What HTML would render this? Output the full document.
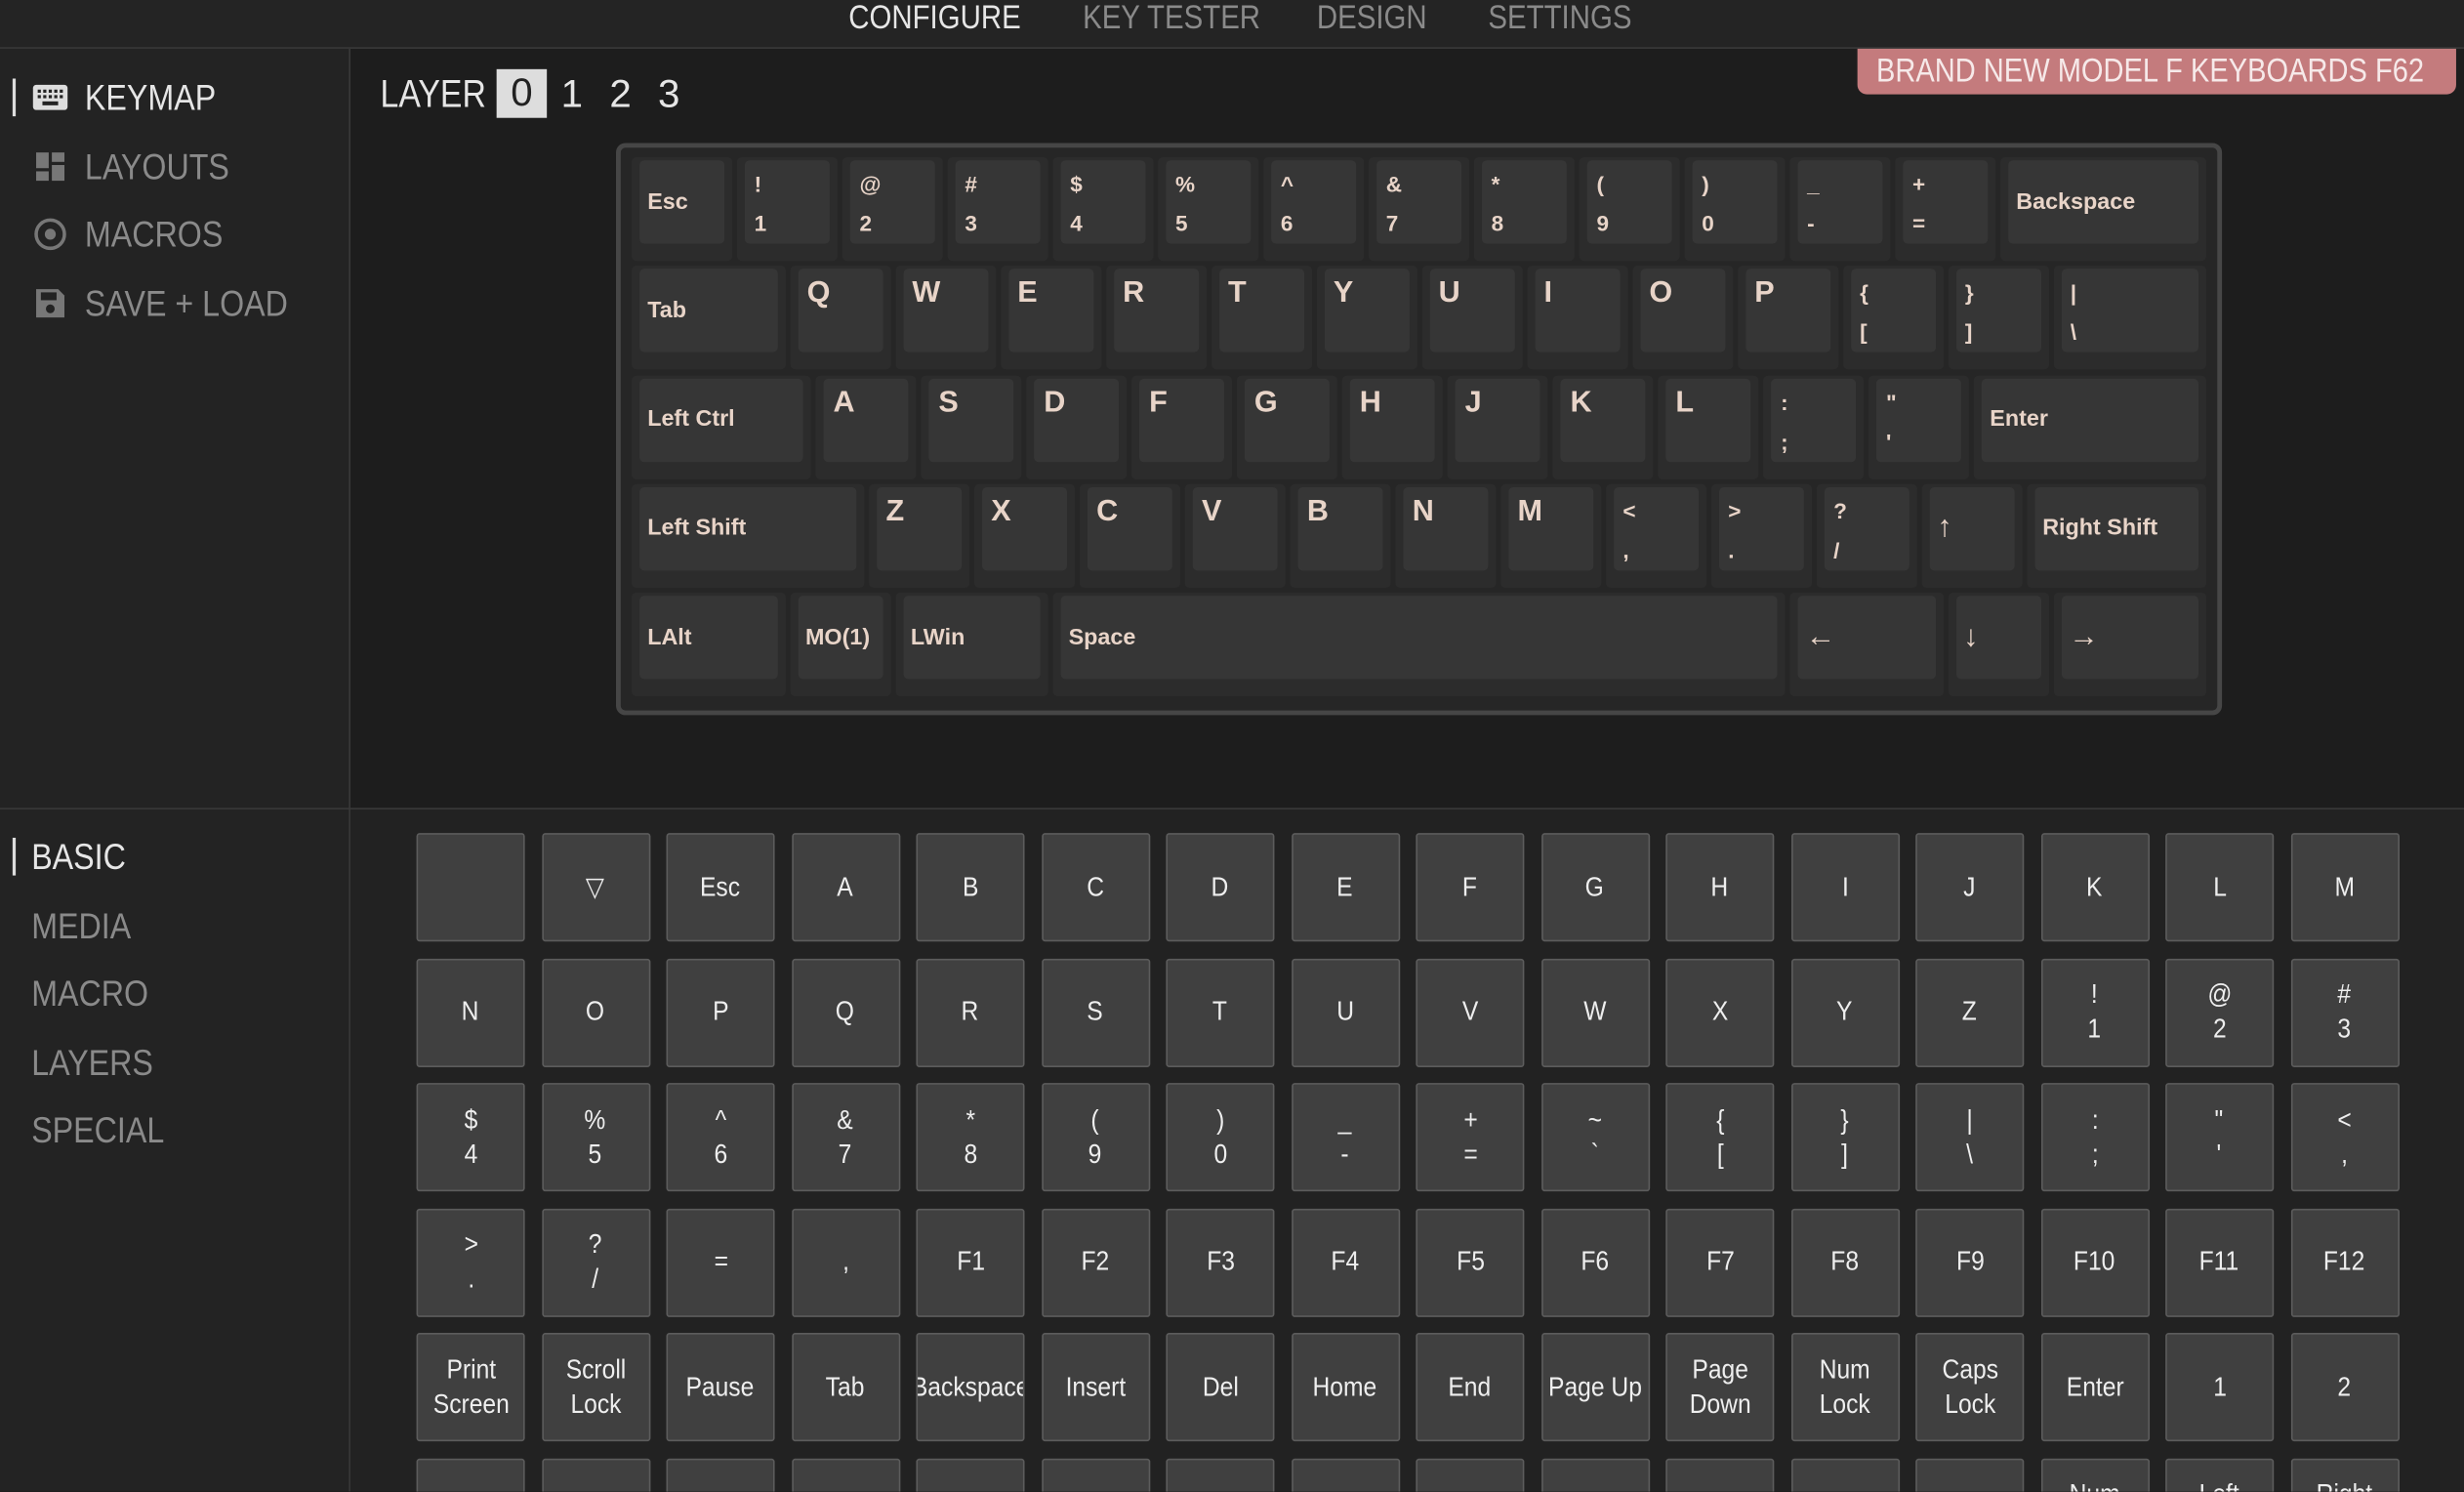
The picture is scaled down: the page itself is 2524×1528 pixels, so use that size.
<!DOCTYPE html>
<html><head><meta charset="utf-8"><style>
html,body{margin:0;padding:0;background:#1d1d1d;overflow:hidden;width:2524px;height:1528px}
#w{position:absolute;left:0;top:0;width:1568px;height:949px;transform:scale(1.60969);transform-origin:0 0;background:#1d1d1d;font-family:"Liberation Sans",sans-serif;overflow:hidden}
.n{display:inline-block;transform:scaleX(.87);transform-origin:0 50%;white-space:nowrap}
.top{position:absolute;left:0;top:0;width:1568px;height:30px;background:#242424;border-bottom:1px solid #3a3a3a}
.nav{position:absolute;top:0;font-size:21px;color:#8a8a8a;line-height:24px;white-space:nowrap}
.side{position:absolute;left:0;top:31px;width:222px;height:918px;background:#232323;border-right:1px solid #393939}
.hline{position:absolute;left:0;top:514px;width:1568px;height:1px;background:#393939}
.bot{position:absolute;left:223px;top:515px;width:1345px;height:434px;background:#222}
.si{position:absolute;left:20px;font-size:23px;color:#8a8a8a;display:flex;align-items:center;gap:10px;line-height:26px;white-space:nowrap}
.si svg{width:24px;height:24px;flex:none}
.bar{position:absolute;left:8px;width:2px;background:#ddd}
.kb{position:absolute;left:392px;top:91px;width:1016px;height:358px;border:3px solid #464646;border-radius:6px;background:#262626}
.k{position:absolute;height:66px;background:#2c2c2c;border-radius:3px}
.c{position:absolute;left:5px;right:5px;top:2px;bottom:11px;background:#363636;border-radius:3px;color:#e8d4c8;font-family:"Liberation Sans",sans-serif;font-weight:bold}
.L{font-size:19px;position:absolute;left:6px;top:5px}
.M{font-size:14.5px;position:absolute;left:5px;top:0;bottom:0;display:flex;align-items:center;white-space:nowrap}
.A{font-size:19px}
.D{font-size:14px;position:absolute;left:6px;top:3px;line-height:25px}
.g{position:absolute;width:67px;height:67px;background:#404040;border:1px solid #5c5c5c;border-radius:2px;color:#eee;font-size:17px;display:flex;align-items:center;justify-content:center;text-align:center;line-height:22px;overflow:hidden;white-space:nowrap}
.g span{display:inline-block;transform:scaleX(.9)}
.bi{position:absolute;left:20px;font-size:23px;color:#8a8a8a;line-height:26px}
</style></head><body><div id="w">
<div class="top"></div>
<div class="nav" style="left:540px;color:#e6e6e6"><span class="n">CONFIGURE</span></div>
<div class="nav" style="left:689px"><span class="n">KEY TESTER</span></div>
<div class="nav" style="left:838px"><span class="n">DESIGN</span></div>
<div class="nav" style="left:947px"><span class="n">SETTINGS</span></div>
<div class="side"></div>
<div class="bot"></div>
<div class="hline"></div>
<div class="bar" style="top:50px;height:24px"></div>
<div class="si" style="top:49px;color:#e6e6e6"><svg viewBox="0 0 24 24"><rect x="1" y="4" width="22" height="16" rx="2" fill="#ddd"/><g fill="#232323"><rect x="4" y="7" width="2" height="2"/><rect x="7.5" y="7" width="2" height="2"/><rect x="11" y="7" width="2" height="2"/><rect x="14.5" y="7" width="2" height="2"/><rect x="18" y="7" width="2" height="2"/><rect x="4" y="10.5" width="2" height="2"/><rect x="7.5" y="10.5" width="2" height="2"/><rect x="11" y="10.5" width="2" height="2"/><rect x="14.5" y="10.5" width="2" height="2"/><rect x="18" y="10.5" width="2" height="2"/><rect x="7" y="14.5" width="10" height="2.5"/></g></svg><span class="n">KEYMAP</span></div>
<div class="si" style="top:93px"><svg viewBox="0 0 24 24" fill="#777"><rect x="3" y="3" width="8" height="10"/><rect x="13" y="3" width="8" height="6"/><rect x="13" y="11" width="8" height="10"/><rect x="3" y="15" width="8" height="6"/></svg><span class="n">LAYOUTS</span></div>
<div class="si" style="top:136px"><svg viewBox="0 0 24 24"><circle cx="12" cy="12" r="9" fill="none" stroke="#777" stroke-width="2.2"/><circle cx="12" cy="12" r="3.5" fill="#777"/></svg><span class="n">MACROS</span></div>
<div class="si" style="top:180px"><svg viewBox="0 0 24 24"><path d="M3 3h14l4 4v14H3z" fill="#777"/><rect x="6" y="5" width="10" height="5" fill="#232323"/><circle cx="12" cy="15.5" r="2.8" fill="#232323"/></svg><span class="n">SAVE + LOAD</span></div>
<div style="position:absolute;left:242px;top:45px;font-size:25px;color:#e6e6e6;line-height:30px"><span class="n" style="transform:scaleX(.84)">LAYER</span></div>
<div style="position:absolute;left:316px;top:44px;width:32px;height:31px;background:#ddd;color:#222;font-size:25px;line-height:31px;text-align:center">0</div>
<div style="position:absolute;left:357px;top:45px;font-size:25px;color:#e6e6e6;line-height:30px;word-spacing:10px">1 2 3</div>
<div style="position:absolute;left:1182px;top:31px;width:381px;height:29px;background:#c47b7d;border-radius:0 0 6px 6px;color:#f6e9e9;font-size:21px;line-height:29px;overflow:hidden;white-space:nowrap"><span class="n" style="margin-left:12px;transform:scaleX(.86)">BRAND NEW MODEL F KEYBOARDS F62</span></div>
<div class="kb"></div>
<div id="keys"></div>
<div id="grid"></div>
<div class="bar" style="top:533px;height:24px"></div>
<div class="bi" style="top:532px;color:#e6e6e6"><span class="n">BASIC</span></div>
<div class="bi" style="top:576px"><span class="n">MEDIA</span></div>
<div class="bi" style="top:619px"><span class="n">MACRO</span></div>
<div class="bi" style="top:663px"><span class="n">LAYERS</span></div>
<div class="bi" style="top:706px"><span class="n">SPECIAL</span></div>
<script>
var U=67,X0=402,Y0=100,P=69.3,h='';
var rows=[
[[1,'M','Esc'],[1,'D','!','1'],[1,'D','@','2'],[1,'D','#','3'],[1,'D','$','4'],[1,'D','%','5'],[1,'D','^','6'],[1,'D','&amp;','7'],[1,'D','*','8'],[1,'D','(','9'],[1,'D',')','0'],[1,'D','_','-'],[1,'D','+','='],[2,'M','Backspace']],
[[1.5,'M','Tab'],[1,'L','Q'],[1,'L','W'],[1,'L','E'],[1,'L','R'],[1,'L','T'],[1,'L','Y'],[1,'L','U'],[1,'L','I'],[1,'L','O'],[1,'L','P'],[1,'D','{','['],[1,'D','}',']'],[1.5,'D','|','\\']],
[[1.75,'M','Left Ctrl'],[1,'L','A'],[1,'L','S'],[1,'L','D'],[1,'L','F'],[1,'L','G'],[1,'L','H'],[1,'L','J'],[1,'L','K'],[1,'L','L'],[1,'D',':',';'],[1,'D','"',"'"],[2.25,'M','Enter']],
[[2.25,'M','Left Shift'],[1,'L','Z'],[1,'L','X'],[1,'L','C'],[1,'L','V'],[1,'L','B'],[1,'L','N'],[1,'L','M'],[1,'D','&lt;',','],[1,'D','&gt;','.'],[1,'D','?','/'],[1,'A','↑'],[1.75,'M','Right Shift']],
[[1.5,'M','LAlt'],[1,'M','MO(1)'],[1.5,'M','LWin'],[7,'M','Space'],[1.5,'A','←'],[1,'A','↓'],[1.5,'A','→']]];
rows.forEach(function(r,i){var x=X0;r.forEach(function(k){var w=k[0]*U;var inner;
if(k[1]=='L')inner='<span class="L">'+k[2]+'</span>';
else if(k[1]=='D')inner='<span class="D">'+k[2]+'<br>'+k[3]+'</span>';
else if(k[1]=='A')inner='<span class="M A">'+k[2]+'</span>';
else inner='<span class="M">'+k[2]+'</span>';
h+='<div class="k" style="left:'+x+'px;top:'+(Y0+i*P)+'px;width:'+(w-3)+'px"><div class="c">'+inner+'</div></div>';x+=w;});});
document.getElementById('keys').innerHTML=h;
var g=[
['','▽','Esc','A','B','C','D','E','F','G','H','I','J','K','L','M'],
['N','O','P','Q','R','S','T','U','V','W','X','Y','Z','!<br>1','@<br>2','#<br>3'],
['$<br>4','%<br>5','^<br>6','&amp;<br>7','*<br>8','(<br>9',')<br>0','_<br>-','+<br>=','~<br>`','{<br>[','}<br>]','|<br>\\',':<br>;','"<br>\'','&lt;<br>,'],
['&gt;<br>.','?<br>/','=',',','F1','F2','F3','F4','F5','F6','F7','F8','F9','F10','F11','F12'],
['Print<br>Screen','Scroll<br>Lock','Pause','Tab','Backspace','Insert','Del','Home','End','Page Up','Page<br>Down','Num<br>Lock','Caps<br>Lock','Enter','1','2'],
['','','','','','','','','','','','','','Num<br>&nbsp;','Left<br>&nbsp;','Right<br>&nbsp;']];
h='';g.forEach(function(r,i){r.forEach(function(t,j){h+='<div class="g" style="left:'+(265+j*79.5)+'px;top:'+(530+i*79.5)+'px"><span>'+t+'</span></div>';});});
document.getElementById('grid').innerHTML=h;
</script>
</div></body></html>
